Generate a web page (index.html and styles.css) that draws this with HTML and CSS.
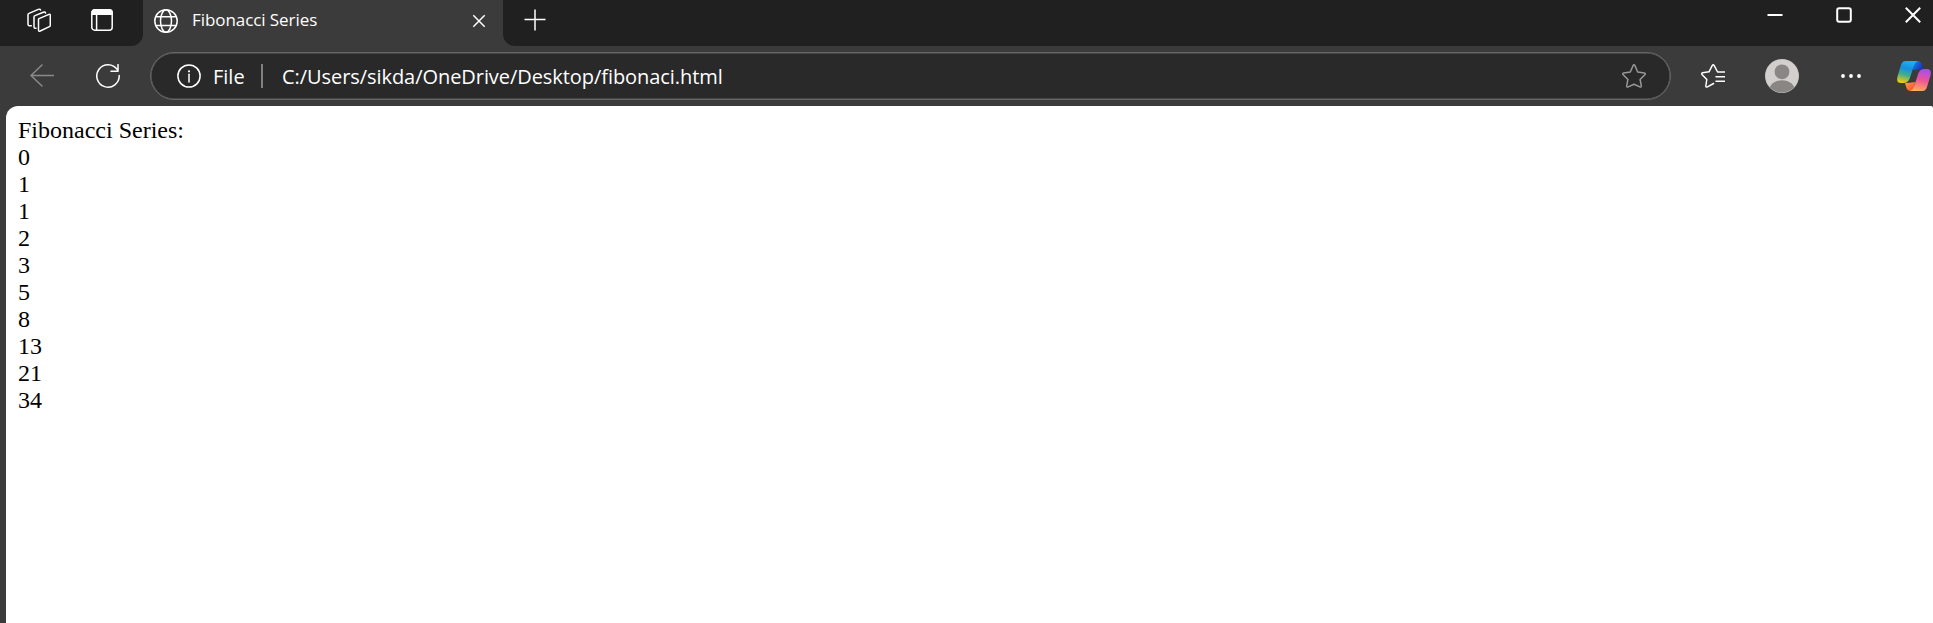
FILE: index.html
```html
<!DOCTYPE html>
<html lang="en">
<head>
<meta charset="utf-8">
<title>Fibonacci Series</title>
<link rel="stylesheet" href="styles.css">
</head>
<body>
<div class="browser">
  <header class="tabbar">
    <div class="tab-actions">
      <svg class="icon" viewBox="0 0 24 24"><path d="M12 10.600 22 6.400q1.300-.5 1.300 1v9.800q0 1-.9 1.400L13.200 23q-1.700.7-1.700-.9V11.500q0-.7.5-.9ZM9 20.300q-2 .2-2-1.500V9q0-1 1-1.400l8.300-3.400q1.800-.7 2.200.8M4.300 17.700q-3.300.7-3.300-1.500V6.800q0-1 1-1.400L11.300 1.400q1.700-.7 2.300.6"/></svg>
      <svg class="icon" viewBox="0 0 24 24"><rect x="1.800" y="1.800" width="20.400" height="20.400" rx="3"/><path class="solid" d="M1.500 7V4q0-2.800 2.800-2.800h15.400q2.800 0 2.800 2.800v3Z"/><path d="M6.600 7v15"/></svg>
    </div>
    <div class="tab">
      <svg class="icon" viewBox="0 0 24 24"><circle cx="12" cy="12" r="11.200"/><ellipse cx="12" cy="12" rx="5.500" ry="11.200"/><path d="M2 7.700h20M2 16.500h20"/></svg>
      <span class="tab-title">Fibonacci Series</span>
      <svg class="tab-close" viewBox="0 0 14 14"><path d="m1.300 1.300 11.400 11.400M12.700 1.300 1.300 12.700"/></svg>
    </div>
    <div class="strip">
      <svg class="plus" viewBox="0 0 22 22"><path d="M11 .5v21M.5 10.500h21"/></svg>
      <div class="window-controls">
        <svg class="control" viewBox="0 0 16 16"><path d="M.5 8h15"/></svg>
        <svg class="control" viewBox="0 0 16 16"><rect x="1.200" y="1.200" width="13.600" height="13.600" rx="2"/></svg>
        <svg class="control" viewBox="0 0 16 16"><path d="m.8.8 14.400 14.400M15.200.8.8 15.200"/></svg>
      </div>
    </div>
  </header>
  <div class="toolbar">
    <svg class="icon back" viewBox="0 0 24 24"><path d="M24 11.500H1M12 1 1 11.500 12 22"/></svg>
    <svg class="icon reload" viewBox="0 0 24 24"><path d="M23.200 11.500A11.200 11.200 0 1 1 21.300 5.700M22 .5v6.700h-7"/></svg>
    <div class="address">
      <svg class="icon" viewBox="0 0 24 24"><circle cx="12" cy="12" r="11.100"/><path d="M12 10.300v7.700"/><circle class="solid" cx="12" cy="7.300" r="1.100"/></svg>
      <span class="scheme">File</span>
      <span class="separator"></span>
      <span class="url">C:/Users/sikda/OneDrive/Desktop/fibonaci.html</span>
      <svg class="icon star" viewBox="0 0 24 24"><path d="M11 1.700q1-1.700 2 0l2.700 6.300 6.600.9q1.700.5.500 1.900l-4.700 4.700 1.200 6.400q.1 1.700-1.500 1L12 20.200l-5.800 2.700q-1.600.7-1.500-1l1.200-6.400-4.700-4.700Q0 9.400 1.700 8.900L8.300 8Z"/></svg>
    </div>
    <svg class="icon favorites" viewBox="0 0 24 24"><path d="M23.800 8H16.600L13.200 1.600q-1-1.600-2 0L8 7.800l-6.300 1q-1.700.5-.5 1.900l4.600 4.800-1 6.500q.1 1.600 1.600.9l6.200-3.400M15 12.700h9M15 17.300h9"/></svg>
    <svg class="avatar" viewBox="0 0 34 34"><clipPath id="face"><circle cx="17" cy="17" r="16.500"/></clipPath><circle cx="17" cy="17" r="17" fill="#bfbcba"/><g clip-path="url(#face)"><path fill="#d2d0ce" d="M0 0h34v34H0z"/><circle cx="17" cy="12.800" r="7.400" fill="#8a8683"/><ellipse cx="17" cy="32" rx="13" ry="10.800" fill="#8a8683"/></g></svg>
    <svg class="dots" viewBox="0 0 20 4"><circle cx="2" cy="2" r="1.900"/><circle cx="10" cy="2" r="1.900"/><circle cx="18" cy="2" r="1.900"/></svg>
    <svg class="copilot" viewBox="0 0 34 30">
      <defs>
        <linearGradient id="cool" x1=".6" y1="0" x2=".35" y2="1"><stop offset="0" stop-color="#20b0f4"/><stop offset=".35" stop-color="#1590df"/><stop offset=".65" stop-color="#44ad8b"/><stop offset="1" stop-color="#f0cb10"/></linearGradient>
        <linearGradient id="warm" x1=".6" y1="0" x2=".4" y2="1"><stop offset="0" stop-color="#a54ef0"/><stop offset=".5" stop-color="#ed5596"/><stop offset="1" stop-color="#ffab5a"/></linearGradient>
        <linearGradient id="blue" x1="0" y1="0" x2="1" y2=".6"><stop offset="0" stop-color="#158be8"/><stop offset="1" stop-color="#1536bd"/></linearGradient>
        <linearGradient id="red" x1="0" y1="0" x2="1" y2="1"><stop offset="0" stop-color="#ffa447"/><stop offset="1" stop-color="#ec4532"/></linearGradient>
      </defs>
      <path fill="url(#blue)" d="M17 0h3.500q3 0 4 3l1.500 5q-5 0-10 1Z"/>
      <path fill="url(#red)" d="M17 30h-3.500q-3 0-4-3L8 22q5 0 10-1Z"/>
      <path fill="url(#cool)" d="M8.500 0H21q-3 1-4.200 5L13.500 15Q12 22 7 22H4q-5 0-3.500-6.500L4 4q1.200-4 4.500-4Z"/>
      <path fill="url(#warm)" d="M25.500 30H13q3-1 4.200-5L20.500 15Q22 8 27 8h3q5 0 3.500 6.500L30 26q-1.200 4-4.500 4Z"/>
    </svg>
  </div>
  <main class="page">
    <div>Fibonacci Series:</div>
    <div>0</div>
    <div>1</div>
    <div>1</div>
    <div>2</div>
    <div>3</div>
    <div>5</div>
    <div>8</div>
    <div>13</div>
    <div>21</div>
    <div>34</div>
  </main>
</div>
</body>
</html>
```
FILE: styles.css
```css
* { box-sizing: border-box; }
html { overflow: hidden; }
body { margin: 0; }
svg { display: block; flex: none; fill: none; stroke: #fff; stroke-width: 1.5; }
.solid { fill: #fff; stroke: none; }
.icon { width: 24px; height: 24px; stroke-linecap: round; stroke-linejoin: round; }

.browser {
  display: flex;
  flex-direction: column;
  height: 100vh;
  overflow: hidden;
  background: #3b3b3b;
  color: #fff;
  font-family: "Open Sans", "Noto Sans", sans-serif;
  white-space: nowrap;
}

.tabbar { display: flex; height: 46px; }
.tab-actions {
  display: flex;
  gap: 39px;
  width: 143px;
  padding: 8px 0 0 27px;
  background: #202020;
  border-bottom-right-radius: 12px;
}
.tab {
  display: flex;
  align-items: center;
  width: 360px;
  padding: 0 17px 4px 11px;
  background: #3b3b3b;
}
.tab-title { margin-left: 14px; padding-bottom: 3px; font-size: 17px; letter-spacing: -0.07px; }
.tab-close { width: 14px; height: 14px; margin-left: auto; }
.strip {
  display: flex;
  flex: 1;
  justify-content: space-between;
  padding: 0 12.5px 0 21px;
  background: #202020;
  border-bottom-left-radius: 12px;
}
.plus { width: 22px; height: 22px; margin-top: 9px; }
.window-controls { display: flex; gap: 53px; margin-top: 7px; }
.control { width: 16px; height: 16px; stroke-width: 2; }

.toolbar { display: flex; align-items: center; height: 60px; padding: 0 2px 0 30px; }
.back { stroke: #8a8a8a; }
.reload { margin-left: 42px; }
.address {
  display: flex;
  align-items: center;
  width: 1521px;
  height: 48px;
  margin-left: 30px;
  padding: 0 24px 0 26px;
  border: 1px solid #666;
  box-shadow: inset 0 0 0 0.5px #666;
  border-radius: 24px;
  background: #292929;
  font-size: 20px;
}
.scheme { width: 48px; margin-left: 12px; }
.separator { width: 2px; height: 24px; background: #808080; }
.url { margin-left: 19px; letter-spacing: -0.06px; }
.star { margin-left: auto; stroke: #999; }
.favorites { margin-left: 30px; }
.avatar { width: 34px; height: 34px; margin-left: 40px; stroke: none; }
.dots { width: 20px; height: 4px; margin-left: 42px; fill: #fff; stroke: none; }
.copilot { width: 34px; height: 30px; margin-left: auto; stroke: none; }

.page {
  flex: 1;
  margin-left: 6px;
  padding: 11px 12px;
  background: #fff;
  color: #000;
  border-radius: 12px 2px 0 0;
  font: 24px/27px "Liberation Serif", "Times New Roman", serif;
}
```
